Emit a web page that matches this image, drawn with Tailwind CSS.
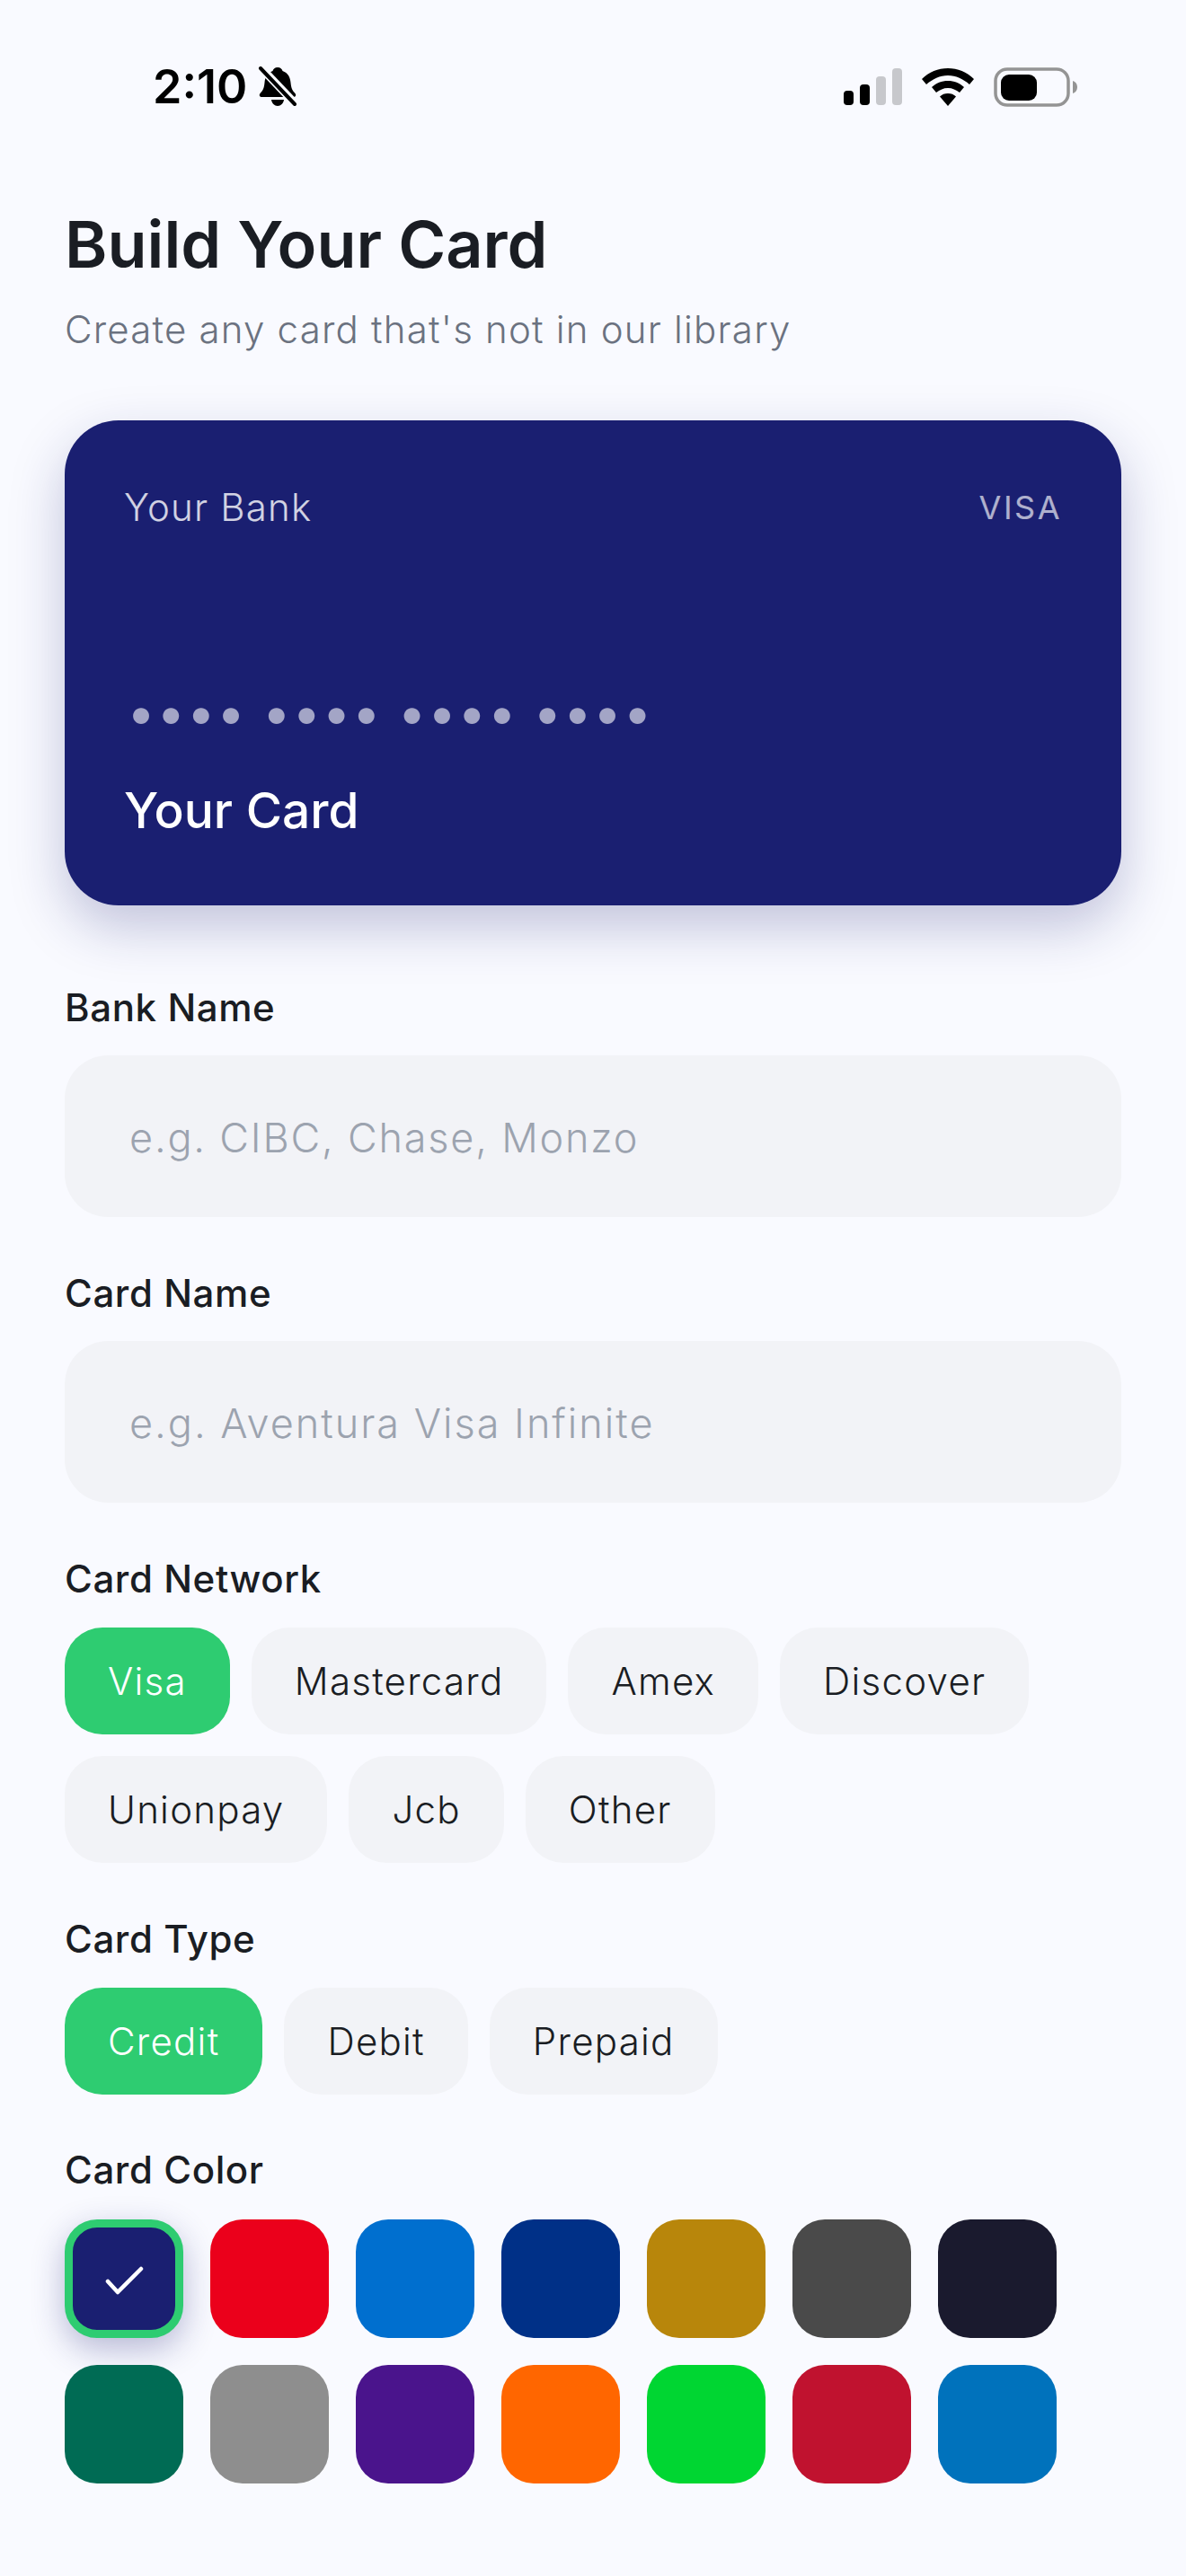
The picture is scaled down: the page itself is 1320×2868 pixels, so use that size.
<!doctype html>
<html lang="en">
  <head>
    <meta charset="UTF-8" />
    <title>Build Your Card</title>
    <script src="https://cdn.jsdelivr.net/npm/@tailwindcss/browser@4"></script>
  </head>
  <body class="bg-[#f9faff] font-['Inter',sans-serif] text-[#1a1d23]">
    <div class="h-[2868px] w-[1320px] overflow-hidden">
      <!-- status bar -->
      <div class="flex h-[194px] items-center pr-[120px] pl-[170px]">
        <span class="text-[52px] leading-none font-semibold text-black">2:10</span>
        <svg class="ml-[12px]" width="44" height="46" viewBox="0 0 44 46">
          <path d="M22 1c3 0 5 2 5.500 4 6 2 8.500 7 9 13 .5 6 2 9 5 12 1.500 2 .5 4-2 4H4.500c-2.500 0-3.500-2-2-4 3-3 4.500-6 5-12 .5-6 3-11 9-13C17 3 19 1 22 1z" fill="#000" />
          <path d="M15 37h14c-.5 4-3.500 7-7 7s-6.500-3-7-7z" fill="#000" />
          <path d="M4 2l38 40" stroke="#f9faff" stroke-width="9" />
          <path d="M3 2l38 40" stroke="#000" stroke-width="4" stroke-linecap="round" />
        </svg>
        <div class="ml-auto flex items-center">
          <svg width="66" height="42" viewBox="0 0 66 42">
            <rect x="1" y="25" width="11" height="16" rx="4" fill="#000" />
            <rect x="19" y="18" width="11" height="23" rx="4" fill="#000" />
            <rect x="37" y="9" width="11" height="32" rx="4" fill="#c7c8cc" />
            <rect x="55" y="0" width="11" height="41" rx="4" fill="#c7c8cc" />
          </svg>
          <svg class="ml-[22px]" width="58" height="42" viewBox="0 0 58 42">
            <path d="M29 0c11 0 21 4 29 12l-5 6C46 12 38 8 29 8S12 12 5 18l-5-6C8 4 18 0 29 0z" fill="#000" />
            <path d="M29 14c7 0 13 2.500 18 7l-5 6c-4-3-8-5-13-5s-9 2-13 5l-5-6c5-4.500 11-7 18-7z" fill="#000" />
            <path d="M29 28c3.500 0 6.500 1 9 3.500L29 42l-9-10.500c2.500-2.500 5.500-3.500 9-3.500z" fill="#000" />
          </svg>
          <svg class="ml-[22px]" width="94" height="44" viewBox="0 0 94 44">
            <rect x="2" y="2" width="81" height="40" rx="13" fill="none" stroke="#949494" stroke-width="3.500" />
            <rect x="8" y="8" width="40" height="29" rx="9" fill="#000" />
            <path d="M88 15c3 1 5 3.500 5 7s-2 6-5 7z" fill="#949494" />
          </svg>
        </div>
      </div>

      <div class="px-[72px]">
        <h1 class="mt-[33px] text-[72px] leading-[90px] font-semibold">Build Your Card</h1>
        <p class="mt-[20px] text-[42px] leading-[60px] font-[350] tracking-[1.200px] text-[#6b7280]">Create any card that's not in our library</p>

        <!-- preview -->
        <div class="mt-[71px] flex h-[540px] flex-col rounded-[60px] bg-[#1a1f71] px-[66px] shadow-[0_24px_60px_rgba(26,31,113,0.25)]">
          <div class="mt-[70px] flex items-center justify-between leading-[54px]">
            <span class="text-[42px] font-[350] tracking-[1.200px] text-white/80">Your Bank</span>
            <span class="text-[36px] tracking-[2.500px] text-white/65">VISA</span>
          </div>
          <div class="mt-[172px] pl-[3px] text-[57px] leading-[60px] tracking-[1.300px] text-white/60">•••• •••• •••• ••••</div>
          <div class="mt-[42px] text-[55px] leading-[72px] font-medium text-white">Your Card</div>
        </div>

        <div class="mt-[87px]">
          <label class="block text-[42px] leading-[54px] font-medium tracking-[0.6px]">Bank Name</label>
          <div class="mt-[26px] flex h-[180px] items-center rounded-[48px] bg-[#f2f3f7] px-[72px] pt-[3px] text-[45px] font-[350] tracking-[1.800px] text-[#9ca3af]">e.g. CIBC, Chase, Monzo</div>
        </div>
        <div class="mt-[58px]">
          <label class="block text-[42px] leading-[54px] font-medium tracking-[0.6px]">Card Name</label>
          <div class="mt-[26px] flex h-[180px] items-center rounded-[48px] bg-[#f2f3f7] px-[72px] pt-[3px] text-[45px] font-[350] tracking-[2px] text-[#9ca3af]">e.g. Aventura Visa Infinite</div>
        </div>

        <div class="mt-[58px]">
          <label class="block text-[42px] leading-[54px] font-medium tracking-[0.6px]">Card Network</label>
          <div class="mt-[27px] flex flex-wrap gap-[24px] text-[42px] leading-[119px] font-[350] tracking-[1.250px]">
            <span class="rounded-[42px] bg-[#2ecc71] px-[48px] text-white">Visa</span>
            <span class="rounded-[42px] bg-[#f2f3f7] px-[48px]">Mastercard</span>
            <span class="rounded-[42px] bg-[#f2f3f7] px-[48px]">Amex</span>
            <span class="rounded-[42px] bg-[#f2f3f7] px-[48px]">Discover</span>
            <span class="rounded-[42px] bg-[#f2f3f7] px-[48px]">Unionpay</span>
            <span class="rounded-[42px] bg-[#f2f3f7] px-[48px]">Jcb</span>
            <span class="rounded-[42px] bg-[#f2f3f7] px-[48px]">Other</span>
          </div>
        </div>

        <div class="mt-[58px]">
          <label class="block text-[42px] leading-[54px] font-medium tracking-[0.6px]">Card Type</label>
          <div class="mt-[27px] flex gap-[24px] text-[42px] leading-[119px] font-[350] tracking-[1.250px]">
            <span class="rounded-[42px] bg-[#2ecc71] px-[48px] text-white">Credit</span>
            <span class="rounded-[42px] bg-[#f2f3f7] px-[48px]">Debit</span>
            <span class="rounded-[42px] bg-[#f2f3f7] px-[48px]">Prepaid</span>
          </div>
        </div>

        <div class="mt-[57px]">
          <label class="block text-[42px] leading-[54px] font-medium tracking-[0.6px]">Card Color</label>
          <div class="mt-[28px] grid grid-cols-[repeat(7,132px)] gap-[30px]">
            <div class="flex h-[132px] items-center justify-center rounded-[36px] border-[9px] border-[#2ecc71] bg-[#1a1f71] shadow-[0_12px_36px_rgba(26,31,113,0.3)]">
              <svg width="48" height="48" viewBox="0 0 48 48"><path d="M6 27l11 12 26-26" fill="none" stroke="#fff" stroke-width="4.500" stroke-linecap="round" stroke-linejoin="round" /></svg>
            </div>
            <div class="h-[132px] rounded-[36px] bg-[#eb001b]"></div>
            <div class="h-[132px] rounded-[36px] bg-[#006fcf]"></div>
            <div class="h-[132px] rounded-[36px] bg-[#003087]"></div>
            <div class="h-[132px] rounded-[36px] bg-[#b8860b]"></div>
            <div class="h-[132px] rounded-[36px] bg-[#4a4a4a]"></div>
            <div class="h-[132px] rounded-[36px] bg-[#1a1a2e]"></div>
            <div class="h-[132px] rounded-[36px] bg-[#006b54]"></div>
            <div class="h-[132px] rounded-[36px] bg-[#8e8e8e]"></div>
            <div class="h-[132px] rounded-[36px] bg-[#4a148c]"></div>
            <div class="h-[132px] rounded-[36px] bg-[#ff6600]"></div>
            <div class="h-[132px] rounded-[36px] bg-[#00d632]"></div>
            <div class="h-[132px] rounded-[36px] bg-[#c0122f]"></div>
            <div class="h-[132px] rounded-[36px] bg-[#0072bc]"></div>
          </div>
        </div>
      </div>
    </div>
  </body>
</html>
